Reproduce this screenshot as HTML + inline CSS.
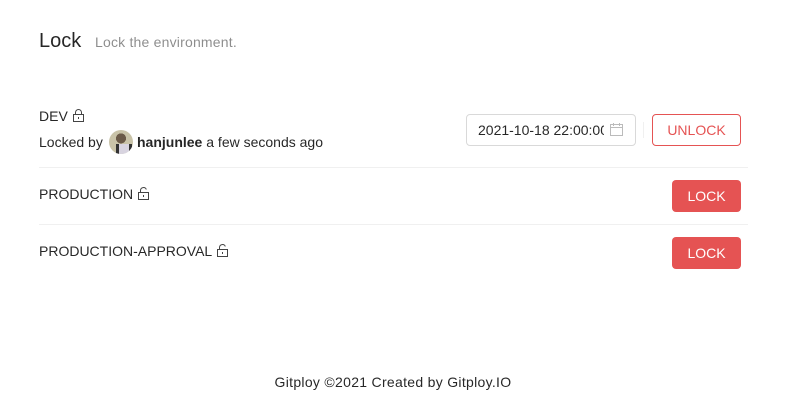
<!DOCTYPE html>
<html><head><style>
body{margin:0;width:786px;height:415px;background:#fff;font-family:"Liberation Sans",sans-serif;color:rgba(0,0,0,.85);position:relative;overflow:hidden}
.a{position:absolute;white-space:nowrap}
.hr{position:absolute;left:39px;width:709px;height:1px;background:#f0f0f0}
.btn{position:absolute;box-sizing:border-box;border-radius:4px;font-size:14px;display:flex;align-items:center;justify-content:center}
.red{background:#e55353;color:#fff}
svg{vertical-align:-1px}
</style></head><body>
<div class="a" style="left:39px;top:30px;font-size:20px;">Lock</div>
<div class="a" style="left:95px;top:34px;font-size:14px;color:rgba(0,0,0,.45);letter-spacing:0.2px">Lock the environment.</div>

<div class="a" style="left:39px;top:108px;font-size:14px">DEV <svg width="13" height="13" viewBox="0 0 13 13"><rect x="1.5" y="5.5" width="10" height="7" fill="none" stroke="#444"/><path d="M3.5 5.5V3.5a3 3 0 0 1 6 0v2" fill="none" stroke="#444"/><rect x="6" y="8" width="1" height="2" fill="#444"/></svg></div>
<div class="a" style="left:39px;top:134px;font-size:14px">Locked by</div>
<div class="a" style="left:109px;top:130px;width:24px;height:24px;border-radius:50%;background:radial-gradient(circle at 50% 35%,#6b5a48 0 25%,#c9c3a8 26% 100%);overflow:hidden"><div style="position:absolute;left:7px;top:14px;width:10px;height:10px;background:#d8d4e0;border-left:3px solid #333;border-right:3px solid #333"></div></div>
<div class="a" style="left:137px;top:134px;font-size:14px"><b style="font-weight:600">hanjunlee</b> a few seconds ago</div>

<div class="a" style="left:466px;top:114px;width:170px;height:32px;box-sizing:border-box;border:1px solid #d9d9d9;border-radius:4px"></div>
<div class="a" style="left:478px;top:122px;font-size:14px;width:126px;overflow:hidden">2021-10-18 22:00:00</div>
<svg class="a" style="left:610px;top:123px" width="13" height="13" viewBox="0 0 13 13"><rect x="0.5" y="1.5" width="12" height="11" fill="none" stroke="#bbb"/><path d="M0.5 4.5h12M3.5 0v3M9.5 0v3" stroke="#bbb"/></svg>
<div class="a" style="left:643px;top:122px;width:1px;height:16px;background:#f0f0f0"></div>
<div class="btn" style="left:652px;top:114px;width:89px;height:32px;border:1px solid #e55353;color:#e55353">UNLOCK</div>

<div class="hr" style="top:167px"></div>
<div class="a" style="left:39px;top:186px;font-size:14px">PRODUCTION <svg width="13" height="13" viewBox="0 0 13 13"><rect x="1.5" y="5.5" width="10" height="7" fill="none" stroke="#444"/><path d="M3.5 5.5V3.5a3 3 0 0 1 5.8-1" fill="none" stroke="#444"/><rect x="6" y="8" width="1" height="2" fill="#444"/></svg></div>
<div class="btn red" style="left:672px;top:180px;width:69px;height:32px">LOCK</div>

<div class="hr" style="top:224px"></div>
<div class="a" style="left:39px;top:243px;font-size:14px">PRODUCTION-APPROVAL <svg width="13" height="13" viewBox="0 0 13 13"><rect x="1.5" y="5.5" width="10" height="7" fill="none" stroke="#444"/><path d="M3.5 5.5V3.5a3 3 0 0 1 5.8-1" fill="none" stroke="#444"/><rect x="6" y="8" width="1" height="2" fill="#444"/></svg></div>
<div class="btn red" style="left:672px;top:237px;width:69px;height:32px">LOCK</div>

<div class="a" style="left:0;width:786px;text-align:center;top:374px;font-size:14px;letter-spacing:0.3px">Gitploy ©2021 Created by Gitploy.IO</div>
</body></html>
